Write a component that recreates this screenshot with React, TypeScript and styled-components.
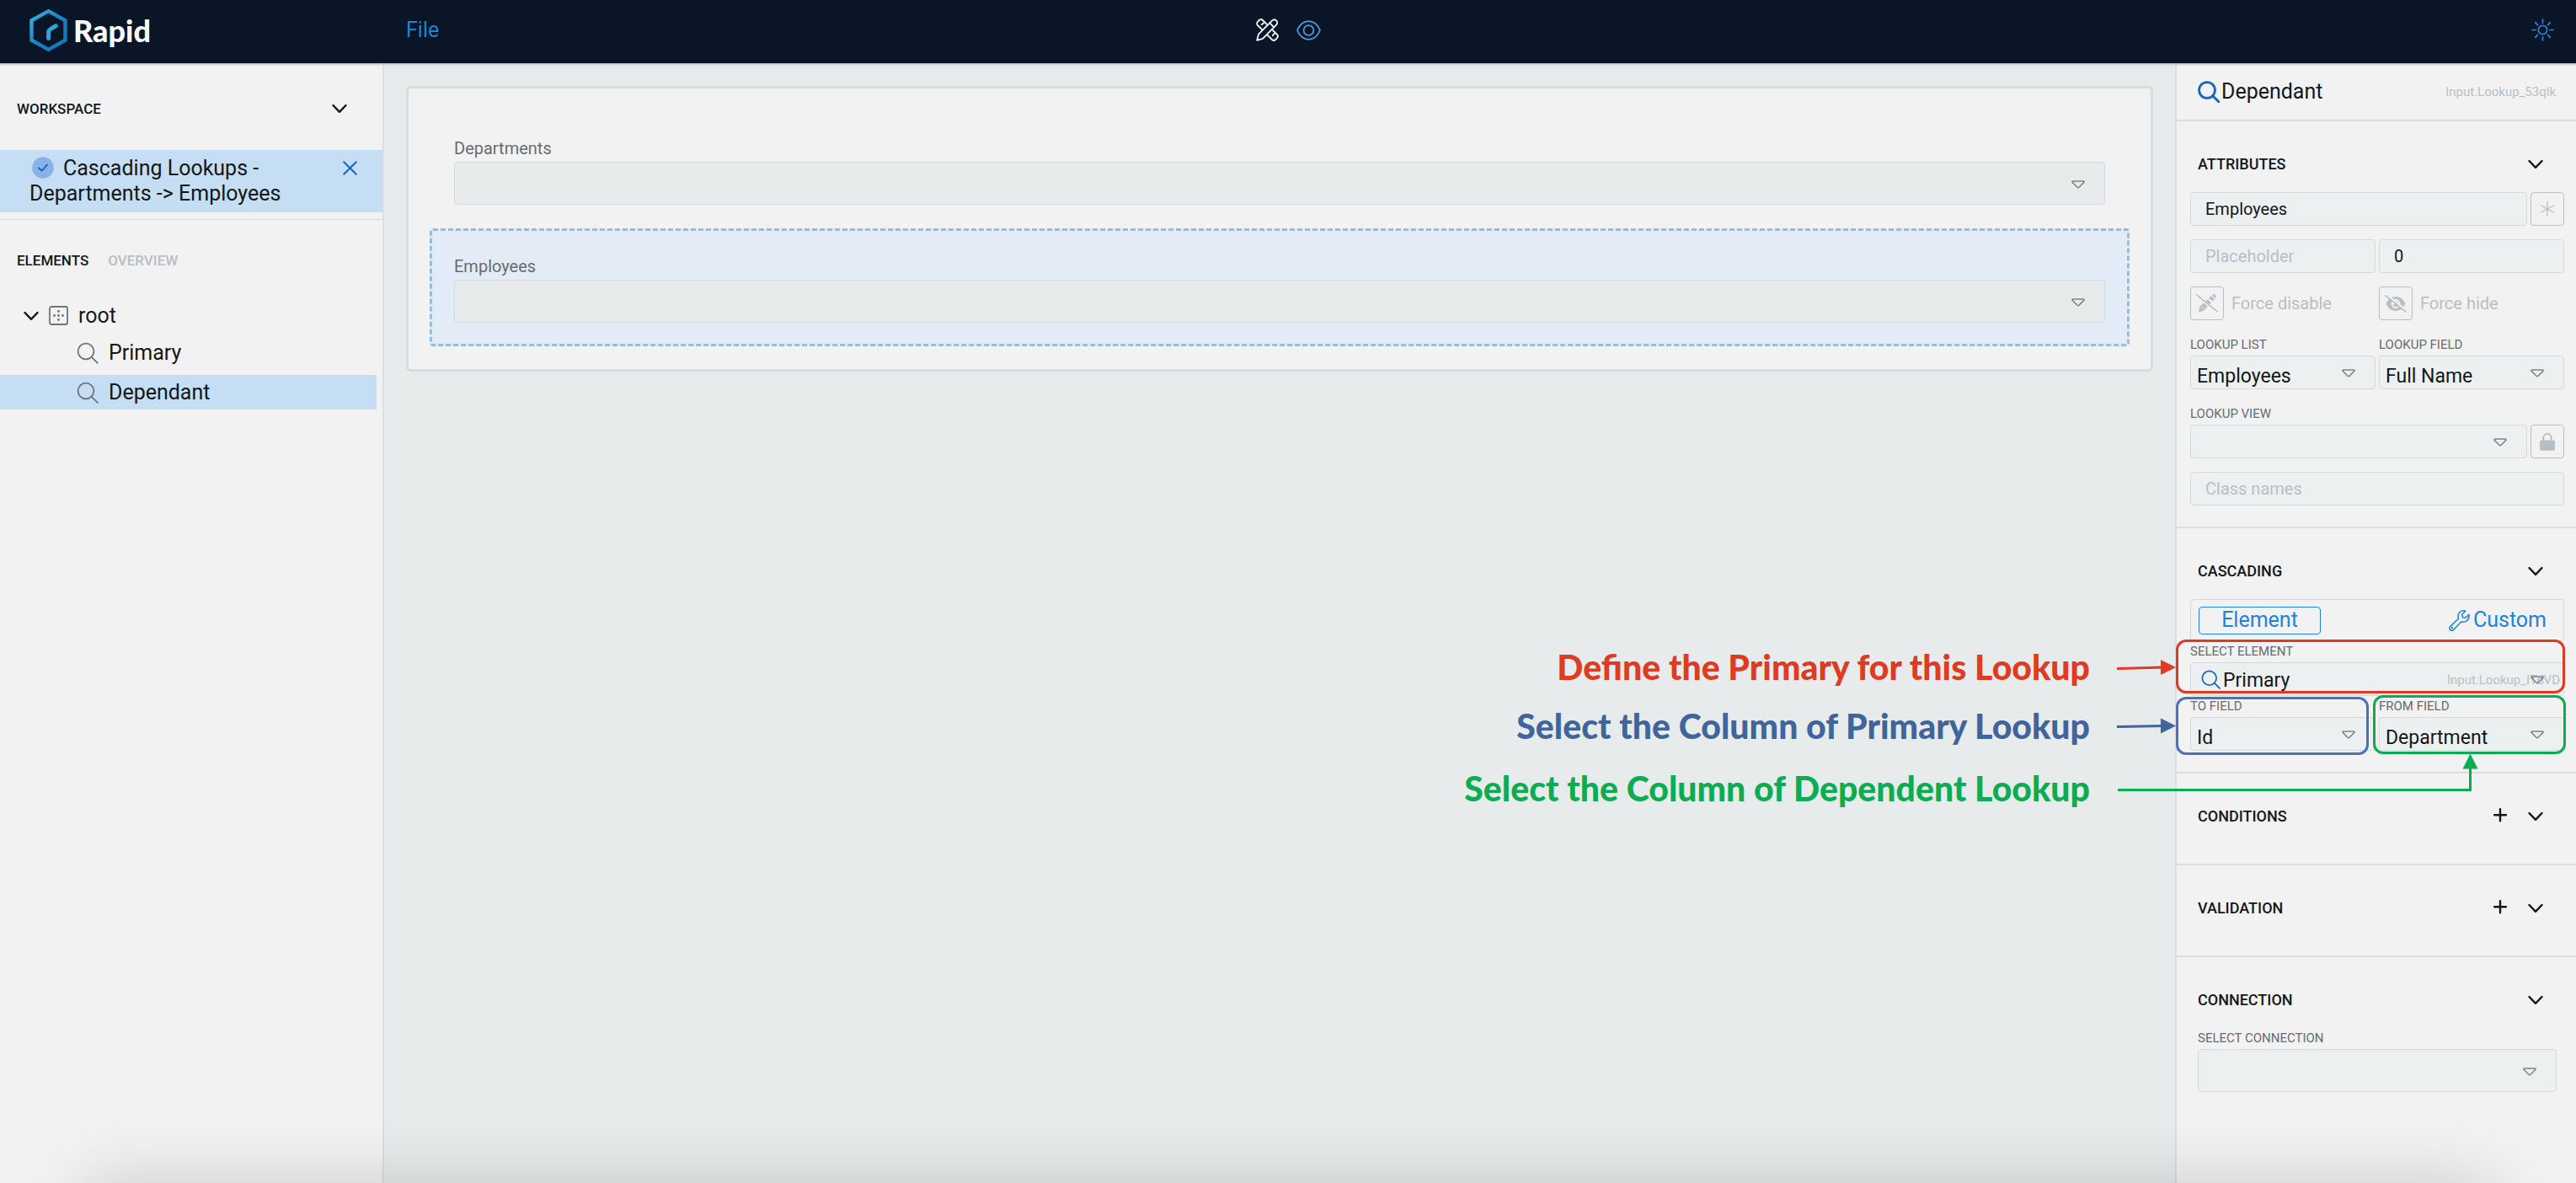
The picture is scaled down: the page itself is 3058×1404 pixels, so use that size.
import React, { useId, type ReactNode } from 'react';
import styled, { createGlobalStyle, css } from 'styled-components';

const color = {
  navy: '#0a1527',
  panel: '#f2f2f2',
  canvas: '#e7ebec',
  field: '#ecf0f1',
  line: '#d5d9dc',
  text: '#12171a',
  label: '#666c70',
  muted: '#b8bfc4',
  blue: '#1f82de',
  deepBlue: '#1763c0',
  highlight: '#c5def3',
  red: '#e03a22',
  steel: '#40659c',
  royal: '#4872c0',
  green: '#0cac50',
};

const Global = createGlobalStyle`
  *, *::before, *::after { box-sizing: border-box; }
  body {
    margin: 0;
    background: ${color.canvas};
    color: ${color.text};
    font-family: Roboto, "Liberation Sans", sans-serif;
    font-size: 25px;
    line-height: 30px;
  }
  button, input, select { font: inherit; color: inherit; margin: 0; }
  svg { display: block; flex: none; }
`;

const Page = styled.div`
  position: relative;
  min-height: 100vh;
  display: flex;
  flex-direction: column;
  overflow: hidden;
`;

const TopBar = styled.header`
  display: grid;
  grid-template-columns: 1fr auto 1fr;
  align-items: center;
  height: 76px;
  padding: 0 26px 4px;
  background: ${color.navy};
  border-bottom: 1px solid #b4bac6;
  box-shadow: 0 1px 2px #c4c9d2;
  z-index: 1;
`;

const BarStart = styled.div`
  display: grid;
  grid-template-columns: 456px auto;
  align-items: center;
`;

const Brand = styled.a`
  display: flex;
  align-items: center;
  gap: 6px;
  padding-left: 8px;
  color: #f7f9fb;
  text-decoration: none;
  font-family: Lato, Roboto, sans-serif;
  font-size: 36px;
  font-weight: 900;
  line-height: 48px;
`;

const PlainButton = styled.button`
  display: flex;
  align-items: center;
  padding: 0;
  border: 0;
  background: none;
  cursor: pointer;
`;

const FileButton = styled(PlainButton)`
  justify-self: start;
  color: ${color.blue};
`;

const ModeSwitch = styled.nav`
  display: flex;
  align-items: center;
  gap: 21px;
`;

const ThemeButton = styled(PlainButton)`
  justify-self: end;
`;

const Columns = styled.div`
  flex: 1;
  display: grid;
  grid-template-columns: 456px minmax(0, 1fr) 476px;
`;

const Sidebar = styled.aside`
  background: ${color.panel};
  border-right: 2px solid #dadde1;
`;

const HeadRow = styled.div`
  display: flex;
  align-items: center;
  justify-content: space-between;
  height: 36px;
`;

const Heading = styled.h2<{ $small?: boolean }>`
  margin: 0;
  font-size: ${(p) => (p.$small ? 17 : 18)}px;
  font-weight: 500;
  line-height: 24px;
  text-transform: uppercase;
`;

const WorkspaceHead = styled(HeadRow)`
  margin: 35px 42px 31px 20px;
`;

const WorkspaceItem = styled.div`
  display: flex;
  align-items: flex-start;
  justify-content: space-between;
  padding: 7px 30px 7px 35px;
  background: ${color.highlight};
`;

const WorkspaceName = styled.span`
  max-width: 330px;

  svg { display: inline-block; vertical-align: -4px; margin: 0 11px 0 3px; }
`;

const CloseButton = styled(PlainButton)`
  padding-top: 6px;
`;

const Rule = styled.hr`
  height: 1px;
  margin: 8px 0 0;
  border: 0;
  background: ${color.line};
`;

const Tabs = styled.div`
  display: flex;
  gap: 23px;
  padding: 36px 20px 30px;
`;

const Tab = styled.button<{ $active?: boolean }>`
  padding: 0;
  border: 0;
  background: none;
  font-size: 17px;
  font-weight: 500;
  line-height: 24px;
  text-transform: uppercase;
  color: ${(p) => (p.$active ? color.text : color.muted)};
`;

const Tree = styled.ul`
  margin: 0;
  padding: 3px 7px 0 0;
  list-style: none;
`;

const Branch = styled.ul`
  display: grid;
  gap: 6px;
  margin: 3px 0 0;
  padding: 0;
  list-style: none;
`;

const TreeRow = styled.div<{ $depth: number; $selected?: boolean }>`
  display: flex;
  align-items: center;
  gap: 12px;
  height: 41px;
  padding-left: ${(p) => 28 + p.$depth * 63}px;
  background: ${(p) => (p.$selected ? color.highlight : 'transparent')};
`;

const Canvas = styled.main`
  padding: 26px;
`;

const FormCard = styled.form`
  padding: 26px 25px 27px;
  border: 3px solid #d9dddf;
  border-radius: 6px;
  background: ${color.panel};
`;

const FormField = styled.div<{ $selected?: boolean }>`
  display: grid;
  padding: 26px 26px 25px;
  border: 3px dashed transparent;
  border-radius: 4px;
  ${(p) =>
    p.$selected &&
    css`
      border-color: #92bee1;
      background: #e3ecf6;
    `}
`;

const FormLabel = styled.label`
  font-size: 20px;
  line-height: 32px;
  color: ${color.label};
`;

const SelectWrap = styled.div`
  display: grid;
  align-items: center;
  min-width: 0;

  > * { grid-area: 1 / 1; }
`;

const NativeSelect = styled.select<{ $tall?: boolean; $canvas?: boolean; $indent?: boolean }>`
  appearance: none;
  width: 100%;
  height: ${(p) => (p.$tall ? 51 : 40)}px;
  padding: ${(p) => (p.$indent ? '4px 60px 0 38px' : '10px 40px 0 7px')};
  border: 1px solid ${color.line};
  border-radius: 4px;
  background: ${(p) => (p.$canvas ? color.canvas : color.field)};
  font-size: 23px;
  line-height: 28px;
`;

const Caret = styled.svg`
  justify-self: end;
  margin: 2px 24px 0 0;
  pointer-events: none;
`;

const Panel = styled.aside`
  background: ${color.panel};
  border-left: 2px solid #dadde1;
`;

const PanelTitle = styled.div`
  display: flex;
  align-items: center;
  height: 66px;
  padding: 0 24px 0 25px;
`;

const TitleText = styled.h1`
  flex: 1;
  margin: 0 0 0 2px;
  font-size: 25px;
  font-weight: 400;
  line-height: 30px;
`;

const ElementId = styled.span`
  font-size: 15px;
  line-height: 20px;
  color: ${color.muted};
`;

const Section = styled.section`
  padding: 33px 14px 23px 16px;
  border-top: 2px solid #dbdee0;
`;

const SectionHead = styled(HeadRow)`
  margin: 0 25px 15px 9px;
`;

const HeadActions = styled.div`
  display: flex;
  align-items: center;
  gap: 25px;
`;

const Body = styled.div<{ $gap?: number; $inset?: boolean }>`
  display: grid;
  gap: ${(p) => p.$gap ?? 0}px;
  padding: ${(p) => (p.$inset ? '0 9px 2px' : '0 0 2px')};
`;

const Pair = styled.div`
  display: grid;
  grid-template-columns: 1fr 1fr;
  gap: 4px;
`;

const WithButton = styled.div`
  display: grid;
  grid-template-columns: 1fr 40px;
  align-items: end;
  gap: 4px;
`;

const TextInput = styled.input`
  width: 100%;
  min-width: 0;
  height: 40px;
  padding: 0 17px;
  border: 1px solid ${color.line};
  border-radius: 4px;
  background: ${color.field};
  font-size: 20px;
  line-height: 24px;

  &::placeholder { color: ${color.muted}; opacity: 1; }
`;

const SquareButton = styled.button`
  display: grid;
  place-items: center;
  width: 40px;
  height: 40px;
  padding: 0;
  border: 1px solid ${color.muted};
  border-radius: 4px;
  background: none;
  color: ${color.muted};
`;

const Toggle = styled.div`
  display: flex;
  align-items: center;
  gap: 9px;
  font-size: 20px;
  line-height: 24px;
  color: ${color.muted};
`;

const SmallLabel = styled.label<{ $tight?: boolean }>`
  display: block;
  font-size: 15px;
  line-height: ${(p) => (p.$tight ? 25 : 26)}px;
  text-transform: uppercase;
  color: ${color.label};
`;

const Segment = styled.div`
  display: flex;
  align-items: center;
  justify-content: space-between;
  height: 50px;
  padding: 0 20px 0 9px;
  border: 1px solid ${color.line};
  border-radius: 4px;
`;

const SegmentButton = styled.button<{ $active?: boolean }>`
  display: flex;
  align-items: center;
  justify-content: center;
  gap: 4px;
  height: 33px;
  padding: 0;
  border: 0;
  background: none;
  color: ${color.blue};
  ${(p) =>
    p.$active &&
    css`
      width: 145px;
      border: 1px solid ${color.blue};
      border-radius: 4px;
    `}
`;

const LeadIcon = styled.span`
  margin-left: 13px;
  pointer-events: none;
`;

const TrailId = styled(ElementId)`
  justify-self: end;
  margin: 2px 5px 0 0;
  pointer-events: none;
`;

const Annotations = styled.div`
  position: absolute;
  top: 0;
  right: 0;
  z-index: 2;
  width: 1400px;
  height: 960px;
  pointer-events: none;
`;

const Callout = styled.p<{ $top: number; $color: string }>`
  position: absolute;
  top: ${(p) => p.$top}px;
  right: 577px;
  margin: 0;
  font-family: Lato, "Open Sans", sans-serif;
  font-size: 41px;
  font-weight: 900;
  line-height: 48px;
  white-space: nowrap;
  color: ${(p) => p.$color};
`;

const Outline = styled.div<{ $top: number; $right: number; $width: number; $height: number; $color: string }>`
  position: absolute;
  top: ${(p) => p.$top}px;
  right: ${(p) => p.$right}px;
  width: ${(p) => p.$width}px;
  height: ${(p) => p.$height}px;
  border: 3px solid ${(p) => p.$color};
  border-radius: 12px;
`;

const Arrows = styled.svg`
  position: absolute;
  top: 760px;
  right: 112px;
`;

const DockShadow = styled.div`
  position: absolute;
  right: 100px;
  bottom: -120px;
  left: 100px;
  height: 120px;
  border-radius: 24px;
  box-shadow: 0 0 80px rgba(0, 0, 0, 0.17);
  pointer-events: none;
`;

const Chevron = () => (
  <svg width="18" height="12" viewBox="0 0 18 12" fill="none" stroke={color.text} strokeWidth="2.4" strokeLinecap="round" strokeLinejoin="round">
    <path d="M1.5 2 9 9.8 16.5 2" />
  </svg>
);

const Plus = () => (
  <svg width="16" height="22" viewBox="0 0 16 22" fill="none" stroke={color.text} strokeWidth="2.4" strokeLinecap="round">
    <path d="M8 2.2v14M1 9.2h14" />
  </svg>
);

const Search = ({ size, stroke, width = 1.5 }: { size: number; stroke: string; width?: number }) => (
  <svg width={size} height={size} viewBox="0 0 26 26" fill="none" stroke={stroke} strokeWidth={width} strokeLinecap="round">
    <circle cx="11" cy="11" r="9.4" />
    <path d="m17.8 17.8 7 7" />
  </svg>
);

const Down = () => (
  <Caret width="16" height="10" viewBox="0 0 16 10" fill="none" stroke="#7c8388" strokeWidth="1.5" strokeLinejoin="round">
    <path d="M1.8.9h12.4c.9 0 1.2.9.6 1.5L9 8.3c-.6.6-1.4.6-2 0L1.2 2.4C.6 1.8.9.9 1.8.9Z" />
  </Caret>
);

const Logo = () => (
  <svg width="47" height="52" viewBox="0 0 47 52" fill="none">
    <defs>
      <linearGradient id="hex" x1="0" y1="0" x2="1" y2="1">
        <stop offset="0" stopColor="#35b6e0" />
        <stop offset="0.5" stopColor="#1a82c4" />
        <stop offset="1" stopColor="#1673b8" />
      </linearGradient>
    </defs>
    <path d="M23.5 3.2 43.5 14.4v23.2L23.5 48.8 3.5 37.6V14.4Z" stroke="url(#hex)" strokeWidth="4.4" />
    <path d="M23.6 35.5V28c0-3.4 5.8-5.2 8.6-7.2" stroke="#2ba5dc" strokeWidth="5" strokeLinecap="round" strokeLinejoin="round" />
  </svg>
);

const PencilRuler = () => (
  <svg width="27" height="27" viewBox="0 0 27 27" fill="none" stroke="#f2f5f7" strokeWidth="1.8" strokeLinecap="round" strokeLinejoin="round">
    <path d="M1.2 25.8 3 18.6 19 2.6c1.6-1.6 3.8-1.6 5.2-.2s1.4 3.6-.2 5.2L8 23.8Z" />
    <path d="m16.4 5.4 5 5" />
    <path d="M7.4 13.4 2 8c-1.4-1.4-1.2-3 0-4.2L3.8 2c1.2-1.2 2.8-1.4 4.2 0l5.4 5.4M6.8 7.2l3-2.6" />
    <path d="M13.6 19.6 19 25c1.4 1.4 3 1.2 4.2 0l1.8-1.8c1.2-1.2 1.4-2.8 0-4.2l-5.4-5.4M19.8 20.2l2.6-3" />
  </svg>
);

const Eye = () => (
  <svg width="29" height="24" viewBox="0 0 29 24" fill="none" stroke="#5499dc" strokeWidth="1.8" strokeLinejoin="round">
    <path d="M1 12C4 5 8.8 1.2 14.5 1.2S25 5 28 12c-3 7-7.8 10.8-13.5 10.8S4 19 1 12Z" />
    <circle cx="14.5" cy="12" r="5.9" />
  </svg>
);

const Sun = () => (
  <svg width="27" height="27" viewBox="0 0 27 27" fill="none" stroke="#2f82d8" strokeWidth="1.7" strokeLinecap="round">
    <circle cx="13.5" cy="13.5" r="5.2" />
    <path d="M13.5 1v4.2M13.5 21.8V26M1 13.5h4.2M21.8 13.5H26M4.6 4.6l3 3M19.4 19.4l3 3M4.6 22.4l3-3M19.4 7.6l3-3" />
  </svg>
);

const CheckBadge = () => (
  <svg width="26" height="26" viewBox="0 0 26 26" fill="none">
    <circle cx="13" cy="13" r="12.8" fill="#8bb2e8" />
    <path d="m8 13.2 3.4 3.4L18 9.6" stroke="#1763d0" strokeWidth="2" strokeLinecap="round" strokeLinejoin="round" />
  </svg>
);

const Close = () => (
  <svg width="17" height="17" viewBox="0 0 17 17" stroke="#1763c8" strokeWidth="2" strokeLinecap="round">
    <path d="m1.2 1.2 14.6 14.6M15.8 1.2 1.2 15.8" />
  </svg>
);

const RootIcon = () => (
  <svg width="23" height="23" viewBox="0 0 23 23" fill="none">
    <rect x="1" y="1" width="21" height="21" rx="2" stroke="#6e7478" strokeWidth="1.8" />
    <g fill="#6e7478">
      <circle cx="11.5" cy="6.5" r="1.4" />
      <circle cx="11.5" cy="11.5" r="1.4" />
      <circle cx="11.5" cy="16.5" r="1.4" />
      <circle cx="6.5" cy="11.5" r="1.4" />
      <circle cx="16.5" cy="11.5" r="1.4" />
    </g>
  </svg>
);

const Asterisk = () => (
  <svg width="18" height="18" viewBox="0 0 18 18" stroke="currentColor" strokeWidth="1.3" strokeLinecap="round">
    <path d="M9 .8v16.4M1.6 5l14.8 8M1.6 13l14.8-8" />
  </svg>
);

const PencilOff = () => (
  <svg width="26" height="22" viewBox="0 0 26 22" fill="currentColor">
    <path d="m15 5 2.6-2.8 4.4 3.6-2.6 2.8zM18.6 1.4c1.6-1.8 3.4-1.4 4.4-.4 1.2 1.2 1 2.6-.2 4zM13.8 6.4l4.2 4-2 2-4.8-3.6zM4.6 14.2l5-3.6 4 4.2-4.4 4.6L3 21.4z" />
    <path d="m6.4 16.8 2.4-1.6" stroke={color.panel} strokeWidth="1.2" />
    <path d="M1 1.2 25 20.6" stroke="currentColor" strokeWidth="1.6" strokeLinecap="round" />
  </svg>
);

const EyeOff = () => (
  <svg width="26" height="21" viewBox="0 0 26 21" fill="none">
    <path d="M1.6 10.5C4 5 8 2 13 2s9 3 11.4 8.5C22 16 18 19 13 19S4 16 1.6 10.5Z" fill="currentColor" />
    <circle cx="13" cy="10.5" r="5.4" fill={color.panel} />
    <path d="M13 7a3.5 3.5 0 1 1-3.4 4.4c2 .4 3.6-1.4 3.4-4.4Z" fill="currentColor" />
    <path d="M2.4-.4 25.8 18.6" stroke={color.panel} strokeWidth="2" />
    <path d="M1 .8 25 20.2" stroke="currentColor" strokeWidth="1.7" strokeLinecap="round" />
  </svg>
);

const Lock = () => (
  <svg width="18" height="21" viewBox="0 0 18 21" fill="none">
    <rect y="8.4" width="18" height="12.4" rx="2" fill="currentColor" />
    <path d="M4.2 9V5.8a4.8 4.8 0 0 1 9.6 0V9" stroke="currentColor" strokeWidth="2" />
  </svg>
);

const Wrench = () => (
  <svg width="25" height="25" viewBox="0 0 25 25" fill="none" stroke={color.blue} strokeWidth="1.5" strokeLinejoin="round">
    <path d="M19.8 1.2c-3.2-1-6.6.2-8 3-1 2-.9 4-.4 6L1.6 19.6a3 3 0 0 0 0 3.8 3 3 0 0 0 4 0L15 13.8c2.2.6 4.4.4 6.2-1 2.4-1.8 3.2-4.6 2.6-7.4l-4 3.8-3.4-.6-.7-3.4Z" />
    <circle cx="4" cy="21" r=".5" />
  </svg>
);

type SelectProps = {
  label: string;
  value?: string;
  icon?: ReactNode;
  id?: string;
  tight?: boolean;
  tall?: boolean;
};

const LabelledSelect = ({ label, value = '', icon, id: elementId, tight, tall }: SelectProps) => {
  const id = useId();
  return (
    <div>
      <SmallLabel htmlFor={id} $tight={tight}>{label}</SmallLabel>
      <SelectWrap>
        <NativeSelect id={id} defaultValue={value} $tall={tall} $indent={!!icon}>
          <option value={value}>{value}</option>
        </NativeSelect>
        {icon && <LeadIcon>{icon}</LeadIcon>}
        {elementId && <TrailId>{elementId}</TrailId>}
        <Down />
      </SelectWrap>
    </div>
  );
};

const CanvasField = ({ label, selected }: { label: string; selected?: boolean }) => {
  const id = useId();
  return (
    <FormField $selected={selected}>
      <FormLabel htmlFor={id}>{label}</FormLabel>
      <SelectWrap>
        <NativeSelect id={id} $tall $canvas />
        <Down />
      </SelectWrap>
    </FormField>
  );
};

const PanelSection = ({ title, addable, children }: { title: string; addable?: boolean; children?: ReactNode }) => (
  <Section>
    <SectionHead>
      <Heading>{title}</Heading>
      <HeadActions>
        {addable && <PlainButton aria-label={`Add to ${title}`}><Plus /></PlainButton>}
        <PlainButton aria-label={`Toggle ${title}`}><Chevron /></PlainButton>
      </HeadActions>
    </SectionHead>
    {children}
  </Section>
);

export default function App() {
  return (
    <Page>
      <Global />
      <TopBar>
        <BarStart>
          <Brand href="#"><Logo />Rapid</Brand>
          <FileButton>File</FileButton>
        </BarStart>
        <ModeSwitch>
          <PlainButton aria-label="Design"><PencilRuler /></PlainButton>
          <PlainButton aria-label="Preview"><Eye /></PlainButton>
        </ModeSwitch>
        <ThemeButton aria-label="Light theme"><Sun /></ThemeButton>
      </TopBar>

      <Columns>
        <Sidebar>
          <WorkspaceHead>
            <Heading $small>Workspace</Heading>
            <PlainButton aria-label="Toggle workspace"><Chevron /></PlainButton>
          </WorkspaceHead>
          <WorkspaceItem>
            <WorkspaceName><CheckBadge />Cascading Lookups - Departments -&gt; Employees</WorkspaceName>
            <CloseButton aria-label="Close"><Close /></CloseButton>
          </WorkspaceItem>
          <Rule />
          <Tabs>
            <Tab $active>Elements</Tab>
            <Tab>Overview</Tab>
          </Tabs>
          <Tree>
            <li>
              <TreeRow $depth={0}><Chevron /><RootIcon />root</TreeRow>
              <Branch>
                <li><TreeRow $depth={1}><Search size={26} stroke="#6e7478" width={1.8} />Primary</TreeRow></li>
                <li><TreeRow $depth={1} $selected><Search size={26} stroke="#6e7478" width={1.8} />Dependant</TreeRow></li>
              </Branch>
            </li>
          </Tree>
        </Sidebar>

        <Canvas>
          <FormCard>
            <CanvasField label="Departments" />
            <CanvasField label="Employees" selected />
          </FormCard>
        </Canvas>

        <Panel>
          <PanelTitle>
            <Search size={26} stroke={color.deepBlue} width={2.8} />
            <TitleText>Dependant</TitleText>
            <ElementId>Input.Lookup_53qlk</ElementId>
          </PanelTitle>

          <PanelSection title="Attributes">
            <Body $gap={16}>
              <WithButton>
                <TextInput aria-label="Label" defaultValue="Employees" />
                <SquareButton aria-label="Required"><Asterisk /></SquareButton>
              </WithButton>
              <Pair>
                <TextInput aria-label="Placeholder" placeholder="Placeholder" />
                <TextInput aria-label="Order" defaultValue="0" />
              </Pair>
              <Pair>
                <Toggle><SquareButton aria-label="Force disable"><PencilOff /></SquareButton>Force disable</Toggle>
                <Toggle><SquareButton aria-label="Force hide"><EyeOff /></SquareButton>Force hide</Toggle>
              </Pair>
              <Pair>
                <LabelledSelect label="Lookup list" value="Employees" />
                <LabelledSelect label="Lookup field" value="Full Name" />
              </Pair>
              <WithButton>
                <LabelledSelect label="Lookup view" />
                <SquareButton aria-label="Lock view"><Lock /></SquareButton>
              </WithButton>
              <TextInput aria-label="Class names" placeholder="Class names" />
            </Body>
          </PanelSection>

          <PanelSection title="Cascading">
            <Body>
              <Segment>
                <SegmentButton $active>Element</SegmentButton>
                <SegmentButton><Wrench />Custom</SegmentButton>
              </Segment>
              <LabelledSelect
                tight
                label="Select element"
                value="Primary"
                icon={<Search size={23} stroke={color.deepBlue} width={2} />}
                id="Input.Lookup_ITdVD"
              />
              <Pair>
                <LabelledSelect tight label="To field" value="Id" />
                <LabelledSelect tight label="From field" value="Department" />
              </Pair>
            </Body>
          </PanelSection>

          <PanelSection title="Conditions" addable />
          <PanelSection title="Validation" addable />
          <PanelSection title="Connection">
            <Body $inset>
              <LabelledSelect tight tall label="Select connection" />
            </Body>
          </PanelSection>
        </Panel>
      </Columns>

      <Annotations>
        <Callout $top={768} $color={color.red}>Define the Primary for this Lookup</Callout>
        <Callout $top={838} $color={color.steel}>Select the Column of Primary Lookup</Callout>
        <Callout $top={912} $color={color.green}>Select the Column of Dependent Lookup</Callout>
        <Outline $top={759} $right={13} $width={462} $height={64} $color={color.red} />
        <Outline $top={827} $right={246} $width={229} $height={69} $color={color.royal} />
        <Outline $top={825} $right={12} $width={229} $height={70} $color={color.green} />
        <Arrows width="434" height="184" viewBox="0 0 434 184" fill="none" strokeWidth="3">
          <path d="M1 33.5 56 32" stroke={color.red} />
          <path d="m53 23 18 9-18 9z" fill={color.red} />
          <path d="m1 102.5 55-1" stroke={color.steel} />
          <path d="m53 92.5 18 9-18 9z" fill={color.steel} />
          <path d="M2 177.5h418.5V150" stroke={color.green} />
          <path d="m411.5 152.5 9-18 9 18z" fill={color.green} />
        </Arrows>
      </Annotations>
      <DockShadow />
    </Page>
  );
}
